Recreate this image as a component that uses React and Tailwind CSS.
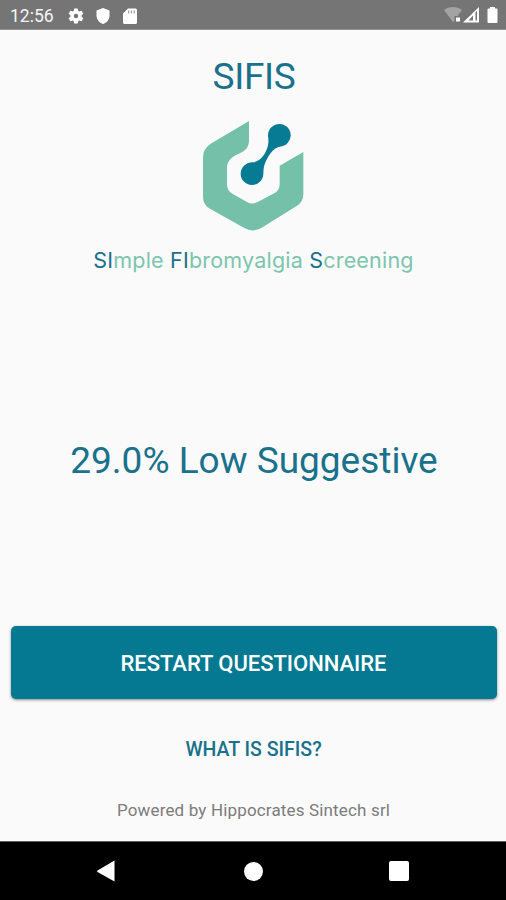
import React from "react";

function StatusBar() {
  return (
    <header className="flex h-[30px] shrink-0 items-center border-b border-[#959595] bg-[#757575] pl-[10px] pr-[8px] text-[#f5f5f5]">
      <span className="w-[57px] pt-[2px] text-[17.5px] leading-[30px]">12:56</span>
      <svg className="mt-[2px] h-[18px] w-[18px]" viewBox="0 0 24 24" fill="#fff">
        <path d="M19.4 13c0-.3.1-.6.1-1s0-.7-.1-1l2.100-1.600c.2-.2.2-.4.1-.6l-2-3.500c-.1-.2-.4-.3-.6-.2l-2.500 1c-.5-.4-1.100-.7-1.700-1l-.4-2.600c0-.3-.2-.5-.4-.5h-4c-.3 0-.5.2-.5.400L9.100 5.100c-.6.300-1.200.600-1.700 1L5 5.100c-.3-.1-.5 0-.7.200l-2 3.500c-.1.200 0 .400.200.600L4.600 11c-.1.300-.1.700-.1 1s0 .7.100 1l-2.100 1.600c-.2.200-.3.400-.2.600l2 3.500c.1.200.4.300.7.200l2.400-1c.5.400 1.100.7 1.700 1l.4 2.600c0 .3.200.5.500.5h4c.2 0 .4-.2.400-.5l.4-2.600c.6-.3 1.200-.6 1.700-1l2.500 1c.2.100.5 0 .6-.2l2-3.500c.1-.2.100-.4-.1-.6L19.400 13zM12 15a3 3 0 1 1 0-6 3 3 0 0 1 0 6z" />
      </svg>
      <svg className="ml-[11px] mt-[2px] h-[16px] w-[14px]" viewBox="0 0 14 16" fill="#fff">
        <path d="M7 0 13.500 2.500v5C13.500 11.500 10.500 15 7 16 3.500 15 .5 11.500.5 7.500v-5z" />
      </svg>
      <svg className="ml-[13px] mt-[2px] h-[16px] w-[14px]" viewBox="0 0 14 16">
        <path fill="#fff" d="M5 .5h7.500A1.500 1.500 0 0 1 14 2v12.500a1.500 1.500 0 0 1-1.500 1.500h-11A1.500 1.500 0 0 1 0 14.500V5.500z" />
        <path stroke="#a5a5a5" strokeWidth="1.300" d="M5.700 2.500v3M8.500 2.500v3M11.300 2.500v3" />
      </svg>
      <svg className="ml-auto mt-[1px] h-[16px] w-[54px]" viewBox="0 0 54 16">
        <path fill="#a3a3a3" d="M0 3C5-1 13-1 18 3l-4.500 6h-3v5L9 15z" />
        <path fill="#fff" d="M12 10.500h4v4h-4z" />
        <path fill="#fff" fillRule="evenodd" d="M35 0v15.500H19zM29 8.500l-4.500 5H29zM31.500 5v8.500h1.500V4z" />
        <path fill="#fff" d="M46 0h5v1.500h1.500q1 0 1 1V15q0 1-1 1h-8q-1 0-1-1V2.500q0-1 1-1H46z" />
      </svg>
    </header>
  );
}

function Logo() {
  return (
    <svg className="mr-[2px] mt-[20px] h-[112px] w-[102px] shrink-0" viewBox="36 207 306 336">
      <path
        fill="#74c0a8"
        d="M177 213V270C177 292 167 303 143 313C121 323 111 336 111 355V403Q111 422 127 431L171 456Q187 465 203 456L254 429Q269 421 269 403V347L340 306V433Q340 456 320 468L215 533Q189 549 163 534L60 476Q39 464 39 440V322Q39 296 62 281Z"
      />
      <path
        fill="#077b93"
        d="M235 264A34 34 0 1 1 269 290C250 292 231 321 223 346C220 357 221 363 220 371A34 34 0 1 1 187 337C211 337 229 309 234 286C236 276 235 271 235 264Z"
      />
    </svg>
  );
}

function NavigationBar() {
  return (
    <nav className="flex h-[59px] shrink-0 items-center justify-between border-t border-[#606060] bg-black pl-[96px] pr-[97px]">
      <svg className="h-[22px] w-[20px]" viewBox="0 0 20 22" fill="#fff">
        <path d="M1.500 10.500 18.500.5v21L1.500 12q-1-.750 0-1.500z" />
      </svg>
      <span className="ml-[2px] h-[19px] w-[19px] rounded-full bg-white" />
      <span className="h-[20px] w-[20px] rounded-[2px] bg-white" />
    </nav>
  );
}

export default function App() {
  return (
    <div className="flex h-[900px] w-[506px] flex-col overflow-hidden bg-[#fafafa] font-['Roboto',sans-serif]">
      <StatusBar />
      <main className="flex min-h-0 flex-1 flex-col items-center whitespace-nowrap pl-[1px]">
        <h1 className="ml-[1px] mt-[25px] text-[37px] leading-[44px] tracking-[-0.3px] text-[#19718c]">SIFIS</h1>
        <Logo />
        <p className="mt-[15px] font-['Inter',sans-serif] text-[21.500px] leading-[28px] tracking-[0.2px] text-[#7cc5ae]">
          <span className="text-[#19718c]">SI</span>mple <span className="text-[#19718c]">FI</span>bromyalgia{" "}
          <span className="text-[#19718c]">S</span>creening
        </p>
        <p className="ml-[1px] mt-[165px] text-[37px] leading-[44px] text-[#19718c]">29.0% Low Suggestive</p>
        <button className="mt-[143px] h-[73px] w-[486px] shrink-0 rounded-[5px] bg-[#057991] pt-[2px] text-[22px] font-medium tracking-[-0.03px] text-white shadow-[0_1px_3px_rgba(0,0,0,0.45)]">
          RESTART QUESTIONNAIRE
        </button>
        <button className="mt-[37px] text-[19.500px] font-medium leading-[28px] text-[#19718c]">WHAT IS SIFIS?</button>
        <p className="mt-[34px] text-[17px] leading-[24px] tracking-[0.16px] text-[#7c7c7c]">
          Powered by Hippocrates Sintech srl
        </p>
      </main>
      <NavigationBar />
    </div>
  );
}
